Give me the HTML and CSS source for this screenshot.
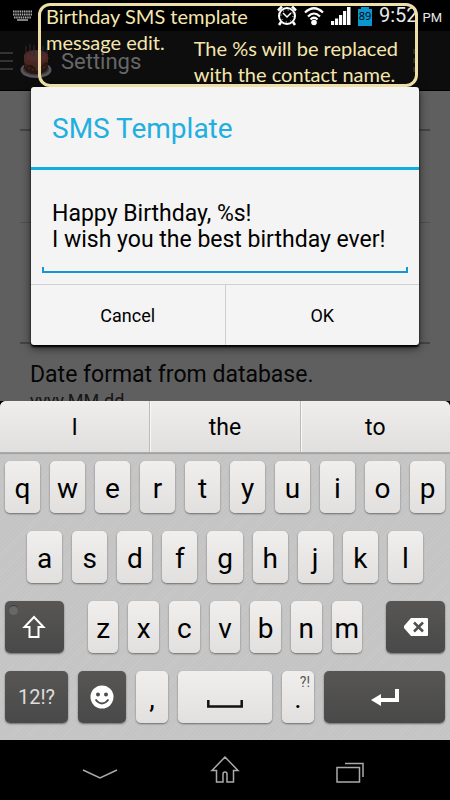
FILE: index.html
```html
<!DOCTYPE html>
<html lang="en">
<head>
<meta charset="utf-8">
<meta name="viewport" content="width=device-width, initial-scale=1">
<title>Settings</title>
<link rel="stylesheet" href="styles.css">
</head>
<body>
<div class="phone">
  <div class="status">
    <svg class="status-keys" width="20" height="12" viewBox="0 0 20 12" fill="none" stroke="#aaa"><path d="M0 1.500h19M0 4.500h19M1 7.500h17" stroke-width="2" stroke-dasharray="1.500 .7"/><path d="M4 10h11" stroke-width="1.500"/></svg>
    <div class="status-right">
      <svg width="20" height="22" viewBox="0 0 20 22" fill="none" stroke="#fff"><circle cx="10" cy="11" r="8" stroke-width="2"/><path d="M1 5.500 5 1.500M19 5.500 15 1.500M4 17l-2 3M16 17l2 3" stroke-width="2.500"/><path d="M6 8l4 4 4-4" stroke-width="1.500"/><circle cx="10" cy="11" r="6" stroke-width="1" stroke-dasharray="1 3.700"/></svg>
      <svg width="20" height="20" viewBox="0 0 20 20" fill="none" stroke="#fff" stroke-width="2.200"><path d="M1 6.500Q10-2 19 6.500M4 10.500Q10 4.500 16 10.500M6.500 13.500Q10 10 13.500 13.500"/><circle cx="10" cy="16.500" r="2.800" fill="#fff" stroke="none"/></svg>
      <svg width="20" height="20" viewBox="0 0 20 20" fill="#fff"><path d="M0 15h3.200v4H0zM4 12.500h3.200V19H4zM8 9h3.200v10H8zM12 5h3.200v14H12zM16 1h3.500v18H16z"/></svg>
      <svg width="14" height="20" viewBox="0 0 14 20"><path d="M0 3h3V1h8v2h3v17H0z" fill="#0b96cf"/><text x="7" y="14" class="battery-text" text-anchor="middle">89</text></svg>
      <span class="time">9:52 <small>PM</small></span>
    </div>
  </div>

  <main class="screen">
    <header class="appbar">
      <svg width="14" height="20" viewBox="0 0 14 20" stroke="#333" stroke-width="2"><path d="M0 2h13M0 10h13M0 18h13"/></svg>
      <svg class="cake" width="32" height="36" viewBox="0 0 32 36"><ellipse cx="16" cy="27" rx="15.500" ry="8" fill="#55555a"/><ellipse cx="16" cy="26" rx="13" ry="6.500" fill="#38383c"/><path d="M4 13v12q2 6 12 6t12-6V13z" fill="#291611"/><path d="M4 13v6q2 4 5 3t6 3 6-1 7-5v-6z" fill="#442821"/><ellipse cx="16" cy="13" rx="12" ry="6" fill="#49302a"/><path d="M6 14V3M10 12V1M14 13V2M19 12V1M23 13V3M27 14V5" stroke="#3d2436"/><path d="M6 16h.1M11 18h.1M17 19h.1M23 17h.1M27 15h.1M9 10h.1M21 9h.1" stroke="#661f20" stroke-width="3" stroke-linecap="round"/><path d="M5 22q5 5 11 5t11-5" fill="none" stroke="#583c32" stroke-dasharray="2 2"/></svg>
      <h1>Settings</h1>
      <svg class="overflow" width="4" height="24" viewBox="0 0 4 24" fill="#292929"><path d="M0 0h3v5H0zM0 9h3v5H0zM0 18h3v5H0z"/></svg>
    </header>
    <ul class="settings">
      <li class="tail"></li>
      <li class="plain"></li>
      <li class="wide"></li>
      <li class="item"><strong>Date format from database.</strong><span>yyyy.MM.dd</span></li>
    </ul>
    <form class="dialog">
      <h2><label for="message">SMS Template</label></h2>
      <div class="field"><textarea id="message" rows="2" spellcheck="false">Happy Birthday, %s!
I wish you the best birthday ever!</textarea></div>
      <div class="actions"><button type="button">Cancel</button><button type="button">OK</button></div>
    </form>
  </main>

  <section class="keyboard" aria-label="Keyboard">
    <div class="suggestions"><button>I</button><button>the</button><button>to</button></div>
    <div class="keys">
      <div class="row"><button>q</button><button>w</button><button>e</button><button>r</button><button>t</button><button>y</button><button>u</button><button>i</button><button>o</button><button>p</button></div>
      <div class="row inset"><button>a</button><button>s</button><button>d</button><button>f</button><button>g</button><button>h</button><button>j</button><button>k</button><button>l</button></div>
      <div class="row third">
        <button class="dark shift" aria-label="Shift"><svg width="24" height="24" viewBox="0 0 24 24" fill="none" stroke="#fff" stroke-width="2"><path d="M12 2 2.500 12H7.500v10h9V12h5z"/></svg></button>
        <div class="letters"><button>z</button><button>x</button><button>c</button><button>v</button><button>b</button><button>n</button><button>m</button></div>
        <button class="dark" aria-label="Delete"><svg width="26" height="20" viewBox="0 0 26 20"><path d="M8 1h16q1 0 1 1v16q0 1-1 1H8L1 11v-2z" fill="#fff"/><path d="m11 5.500 9 9m0-9-9 9" stroke="#50504f" stroke-width="2.500"/></svg></button>
      </div>
      <div class="row bottom">
        <button class="dark symbols">12!?</button>
        <button class="dark" aria-label="Emoji"><svg width="24" height="24" viewBox="0 0 24 24"><circle cx="12" cy="12" r="11.500" fill="#fff"/><circle cx="8" cy="9.500" r="2" fill="#4d4d4c"/><circle cx="16" cy="9.500" r="2" fill="#4d4d4c"/><path d="M5.500 14.500q6.500 8 13 0" fill="none" stroke="#4d4d4c" stroke-width="1.800"/></svg></button>
        <button>,</button>
        <button class="space" aria-label="Space"><svg width="36" height="8" viewBox="0 0 36 8" fill="none" stroke="#111" stroke-width="2.500"><path d="M1.300 0v6.500h33.400V0"/></svg></button>
        <button class="period">.<small>?!</small></button>
        <button class="dark" aria-label="Enter"><svg width="30" height="18" viewBox="0 0 30 18"><path d="M1 12 11 6v4h14V1h4v13H11v4z" fill="#fff"/></svg></button>
      </div>
    </div>
  </section>

  <nav class="nav">
    <button aria-label="Back"><svg width="36" height="30" viewBox="0 0 36 30"><path d="m1 15 17 8 17-8"/></svg></button>
    <button aria-label="Home"><svg width="30" height="30" viewBox="0 0 30 30"><path d="M15 2 2 15.500h4.500V27H13v-8q0-2 2-2t2 2v8h6.500V15.500H28z"/></svg></button>
    <button aria-label="Recent apps"><svg width="30" height="30" viewBox="0 0 30 30"><path d="M2 12.500h22.500V27H2zM10 8.500h18V22"/></svg></button>
  </nav>

  <div class="note">
    <p>Birthday SMS template<br>message edit.</p>
    <p class="note-right">The %s will be replaced<br>with the contact name.</p>
  </div>
</div>
</body>
</html>
```
FILE: styles.css
```css
* { box-sizing: border-box; }
body { margin: 0; background: #000; font-family: Roboto, sans-serif; color: #000; }
h1, h2, p, ul { margin: 0; padding: 0; font-weight: 400; }
button { border: 0; padding: 0; background: none; font: inherit; color: inherit; }
svg { display: block; flex: none; }

.phone { position: relative; display: flex; flex-direction: column; min-height: 100vh; }

.status { display: flex; align-items: center; justify-content: space-between; height: 31px; padding: 0 8px 0 13px; }
.status-right { display: flex; align-items: center; gap: 7px; color: #e8e8e8; }
.battery-text { font: 11px "Open Sans", sans-serif; fill: #000; }
.time { padding-top: 2px; font-size: 20px; line-height: 29px; white-space: nowrap; }
.time small { font-size: 13px; }

.screen { position: relative; flex: 1; display: flex; flex-direction: column; background: #5f5f5f; }
.appbar { display: flex; align-items: center; height: 60px; padding-right: 33px; background: #0d0d0d; border-bottom: 1px solid #000; }
.cake { margin-left: 6px; }
.appbar h1 { flex: 1; margin-left: 9px; padding-top: 2px; font-size: 22px; color: #676767; }

.settings { flex: 1 0 0; list-style: none; padding: 0 20px; overflow: hidden; min-height: 310px; margin-bottom: -8px; }
.settings li { border-bottom: 2px solid #444; }
.settings .tail { height: 40px; }
.settings .plain { height: 92px; border-bottom: 1px solid #505050; }
.settings .wide { height: 121px; }
.settings .item { display: flex; flex-direction: column; border: 0; padding: 17px 10px 0; line-height: 28px; }
.item strong { font-size: 23px; font-weight: 400; color: #050505; }
.item span { font-size: 18px; line-height: 24px; color: #161616; }

.dialog { position: absolute; top: 56px; left: 31px; right: 31px; background: #f4f4f4; border-radius: 3px; box-shadow: 0 2px 2px #000, 0 3px 10px #0009; }
.dialog h2 { height: 83px; padding: 0 21px; border-bottom: 3px solid #10aee0; font-size: 28px; line-height: 84px; color: #22afe0; }
.field { position: relative; margin: 31px 11px 11px; border-bottom: 2px solid #1497d0; }
.field::after { content: ""; position: absolute; left: 0; right: 0; bottom: 0; height: 4px; border: solid #1497d0; border-width: 0 2px; pointer-events: none; }
.field textarea { display: block; width: 100%; height: 70px; padding: 0 0 0 10px; border: 0; outline: 0; resize: none; overflow: hidden; background: none; font: 23px/26px Roboto, sans-serif; color: #000; white-space: pre; }
.actions { display: flex; border-top: 1px solid #d0d0d0; }
.actions button { flex: 1; height: 60px; font-size: 18px; }
.actions button + button { border-left: 1px solid #d0d0d0; }

.keyboard { position: relative; background: #c6c6c6 repeating-linear-gradient(135deg, #c8c8c8 0 1px, #c4c4c4 1px 3px); border-radius: 6px 6px 0 0; }
.suggestions { display: flex; height: 52px; background: linear-gradient(#efeeed, #e0dfde); border-bottom: 1px solid #aaa; border-radius: 6px 6px 0 0; box-shadow: 0 1px 1px #0003; }
.suggestions button { flex: 1; font-size: 23px; padding-top: 2px; }
.suggestions button + button { border-left: 1px solid #bbb; box-shadow: inset 1px 0 #f8f8f8; }
.keys { display: grid; gap: 18px; padding: 8px 5px 17px; }
.row, .letters { display: flex; gap: 10px; }
.row.inset { padding: 0 22px; }
.row button { flex: 1 1 0; min-width: 0; height: 52px; display: flex; align-items: center; justify-content: center; padding-top: 3px; border-radius: 5px; background: linear-gradient(#f0efee, #e1e0df); box-shadow: 0 1px 2px #0007; font-size: 28px; }
.row .dark { padding: 0; background: linear-gradient(#575654, #494949); color: #ddd; }
.third { display: grid; grid-template-columns: 59fr 275fr 59fr; gap: 24px; }
.bottom { display: grid; grid-template-columns: 63fr 48fr 32fr 94fr 32fr 121fr; }
.row .symbols { font-size: 20px; }
.row .space { padding-top: 14px; }
.shift, .period { position: relative; }
.shift::before { content: ""; position: absolute; top: 5px; left: 4px; width: 9px; height: 9px; border-radius: 50%; background: #686868; box-shadow: 0 -1px #3c3c3c; }
.period small { position: absolute; top: 3px; right: 4px; font-size: 14px; line-height: 16px; color: #555; }

.nav { display: grid; grid-template-columns: 100px 1fr 100px; justify-items: center; align-items: center; height: 60px; padding: 0 50px; background: #000; }
.nav svg { fill: none; stroke: #aaa; stroke-width: 1.500; }

.note { position: absolute; top: 3px; left: 38px; right: 32px; height: 84px; border: 3px solid #eedfa8; border-radius: 12px; color: #f5e6ae; font: 20px/26px Lato, sans-serif; pointer-events: none; white-space: nowrap; }
.note p { position: absolute; top: -3px; left: 5px; }
.note .note-right { top: 29px; left: auto; right: 17px; }
```
